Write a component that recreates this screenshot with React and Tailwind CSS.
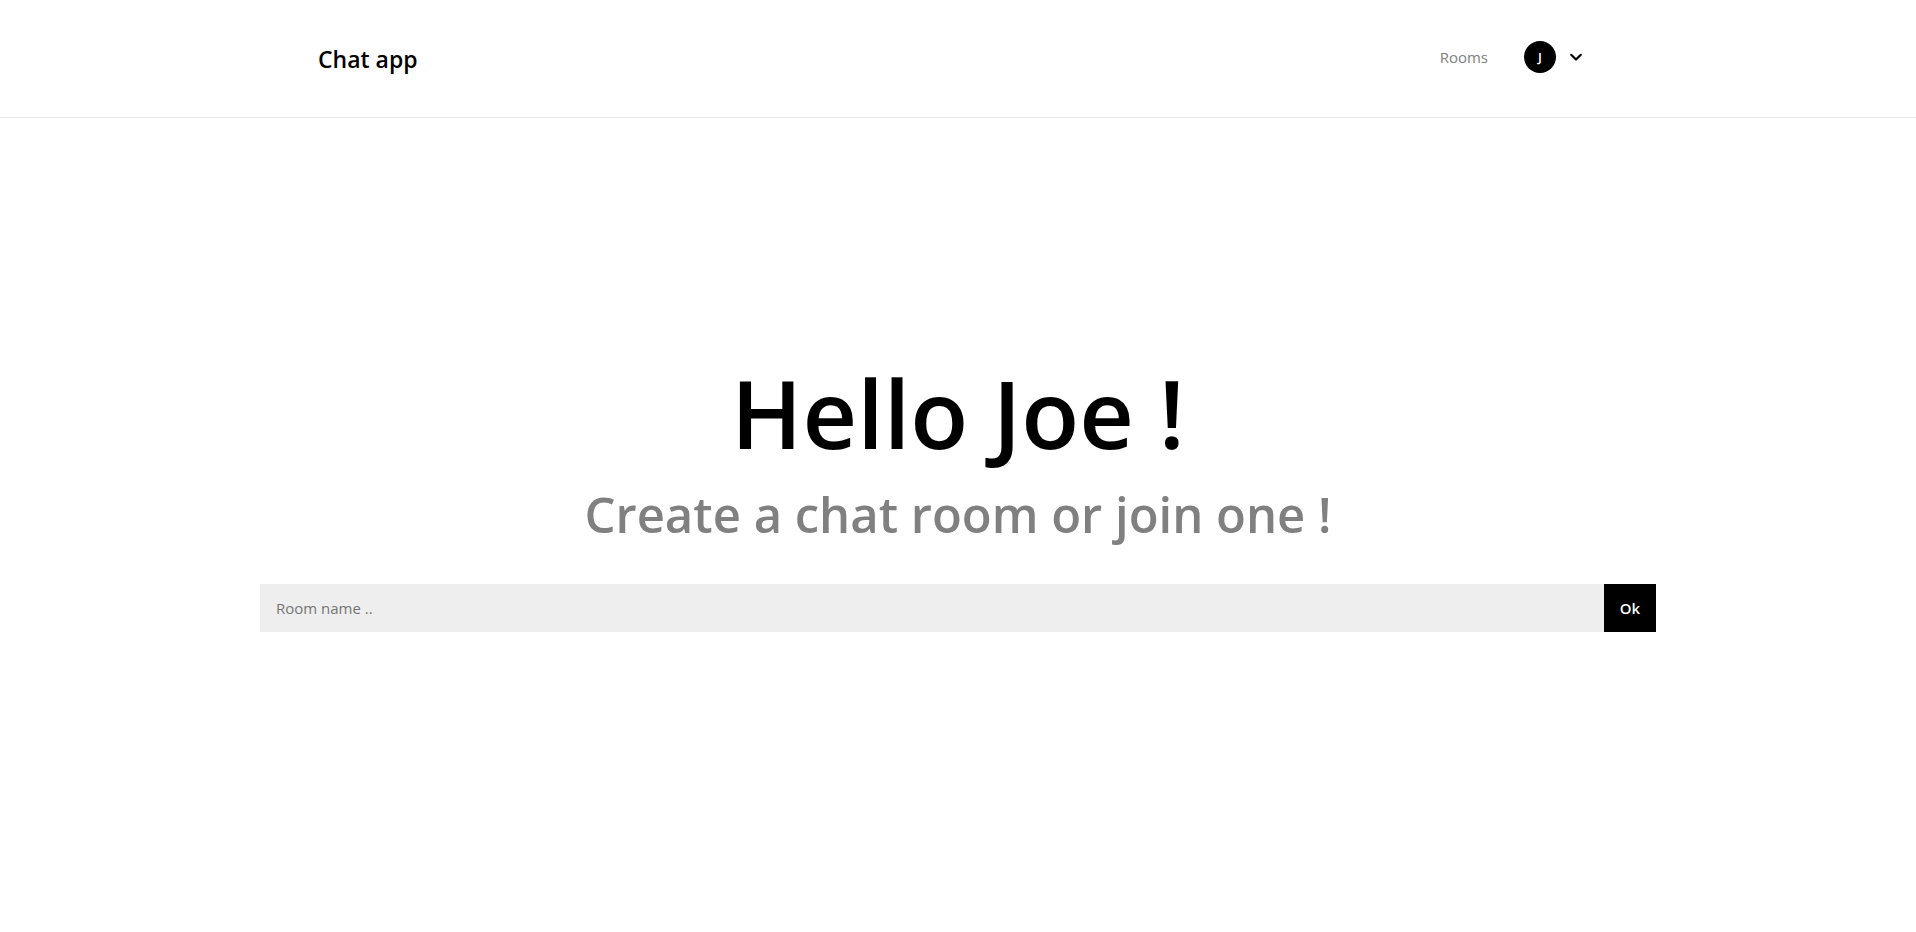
import { useState } from 'react';

function Header() {
  return (
    <header className="border-b border-[#e8e8e8]">
      <div className="mx-auto flex h-[117px] w-full max-w-7xl items-center justify-between pr-3.5">
        <a href="#home" className="text-[23px] leading-8 font-semibold text-black">
          Chat app
        </a>
        <nav className="mb-1 flex items-center">
          <a href="#rooms" className="text-[15px] leading-6 text-[#808080]">
            Rooms
          </a>
          <button type="button" aria-label="Account menu" className="ml-9 flex items-center gap-3">
            <span className="flex size-8 items-center justify-center rounded-full bg-black text-[13px] leading-4 font-semibold text-white">
              J
            </span>
            <svg viewBox="0 0 16 16" className="size-4" fill="none" stroke="black" strokeWidth="2.2" strokeLinecap="round" strokeLinejoin="round">
              <path d="M3.2 5.8 8 10.5l4.8-4.7" />
            </svg>
          </button>
        </nav>
      </div>
    </header>
  );
}

function RoomForm() {
  const [name, setName] = useState('');
  return (
    <form className="flex h-12 w-full max-w-[1396px]" onSubmit={(e) => e.preventDefault()}>
      <input
        type="text"
        aria-label="Room name"
        placeholder="Room name .."
        value={name}
        onChange={(e) => setName(e.target.value)}
        className="min-w-0 flex-1 bg-[#eeeeee] px-4 text-[15px] leading-6 text-black outline-none placeholder:text-[#757575]"
      />
      <button type="submit" className="w-[52px] bg-black text-[15px] leading-6 font-semibold text-white">
        Ok
      </button>
    </form>
  );
}

export default function App() {
  return (
    <div className="flex min-h-screen flex-col bg-white font-['Segoe_UI','Open_Sans','Noto_Sans',sans-serif]">
      <Header />
      <main className="flex flex-1 flex-col items-center pt-[230px]">
        <h1 className="text-[95px] leading-[128px] font-semibold text-black">Hello Joe !</h1>
        <h2 className="mb-8 text-[49px] leading-[76px] font-semibold text-[#808080]">
          Create a chat room or join one !
        </h2>
        <RoomForm />
      </main>
    </div>
  );
}
